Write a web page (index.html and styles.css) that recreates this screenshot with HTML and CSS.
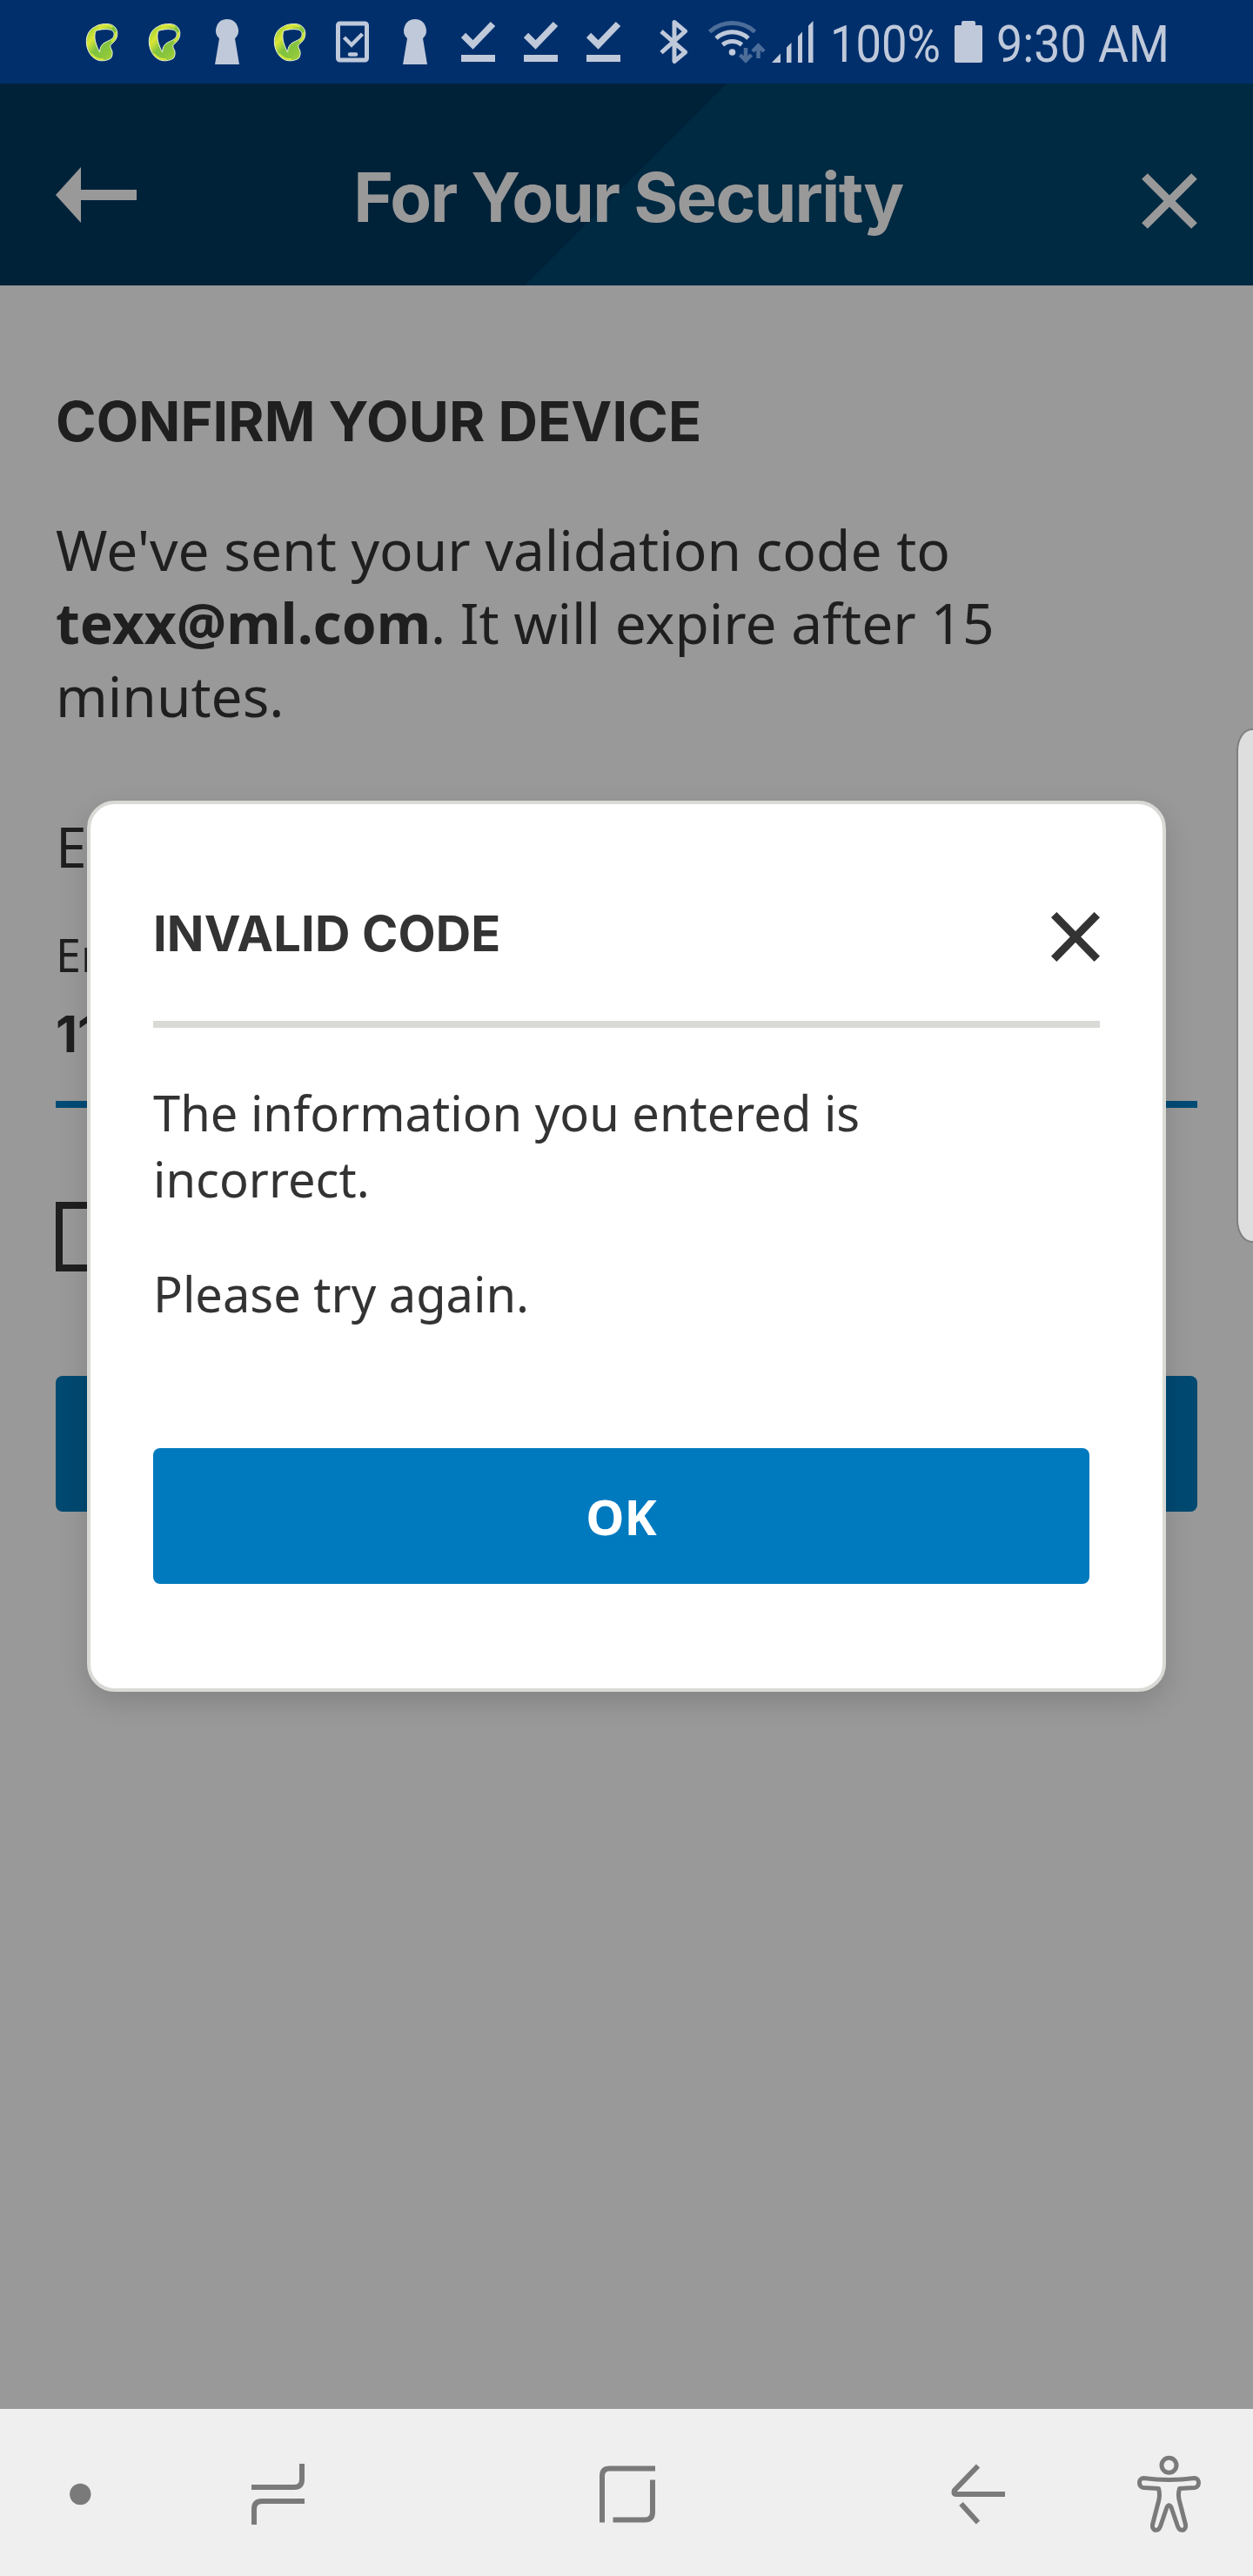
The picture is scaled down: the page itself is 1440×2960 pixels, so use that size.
FILE: index.html
```html
<!DOCTYPE html>
<html lang="en">
<head>
<meta charset="utf-8">
<title>For Your Security</title>
<link rel="stylesheet" href="styles.css">
</head>
<body>
<svg class="defs" width="0" height="0" aria-hidden="true">
  <defs>
    <linearGradient id="leaf" x1="0" y1="0" x2="1" y2="1">
      <stop offset="0" stop-color="#8dc63f"/><stop offset=".12" stop-color="#a4d037"/><stop offset=".3" stop-color="#d9e636"/>
      <stop offset=".5" stop-color="#7fc241"/><stop offset=".72" stop-color="#8cc63c"/><stop offset="1" stop-color="#b5d837"/>
    </linearGradient>
    <symbol id="ribbon" viewBox="0 0 72 96">
      <g transform="translate(-1 0) scale(.3333)">
        <path fill="url(#leaf)" stroke="#eef6d8" stroke-width="3" fill-rule="evenodd" d="M88 92C100 84 118 81 135 83C155 86 167 101 164 122C162 137 153 145 143 153C138 158 141 166 146 174C149 184 147 194 142 201C128 210 108 212 94 206C70 195 57 168 58 140C59 118 70 100 88 92ZM90 106C84 124 87 140 93 156C96 164 99 173 104 180C104 166 109 154 121 147C134 140 149 136 153 123C155 112 149 104 138 102C121 99 105 102 90 106Z"/>
        <path fill="none" stroke="#d8e63a" stroke-width="6" stroke-linecap="round" d="M101 90Q125 85 145 92M160 113Q159 132 146 142M76 187Q91 205 115 205"/>
      </g>
    </symbol>
    <symbol id="keyhole" viewBox="0 0 72 96">
      <path fill="#bfc9da" d="M36 22a13 13 0 0 1 9 22.300L50 74H22L27 44.300A13 13 0 0 1 36 22Z"/>
    </symbol>
    <symbol id="done" viewBox="0 0 72 96">
      <path fill="none" stroke="#bfc9da" stroke-width="7.500" d="M19.500 40.500L30.500 51.500L53.500 27.500"/>
      <path fill="#bfc9da" d="M17 63H56V71H17Z"/>
    </symbol>
  </defs>
</svg>
<div class="screen">
  <div class="status">
    <svg class="slot"><use href="#ribbon"/></svg>
    <svg class="slot"><use href="#ribbon"/></svg>
    <svg class="slot"><use href="#keyhole"/></svg>
    <svg class="slot"><use href="#ribbon"/></svg>
    <svg class="slot" viewBox="0 0 72 96" fill="none" stroke="#bfc9da">
      <rect x="19.500" y="27" width="33" height="42" rx="2" stroke-width="5"/>
      <path stroke-width="4.500" d="M26.500 43L35 51.500L47.500 39"/>
      <path stroke-width="4.500" stroke-linecap="round" d="M33 62.500H40"/>
    </svg>
    <svg class="slot"><use href="#keyhole"/></svg>
    <svg class="slot"><use href="#done"/></svg>
    <svg class="slot"><use href="#done"/></svg>
    <svg class="slot"><use href="#done"/></svg>
    <svg width="81" height="96" viewBox="729 0 81 96" fill="none" stroke="#bfc9da" stroke-width="5" stroke-linejoin="round">
      <path d="M760 36L787.500 60L775 70.500V25.500L787.500 36L760 60.500"/>
    </svg>
    <svg width="72" height="96" viewBox="810 0 72 96" fill="none" stroke="#bfc9da" stroke-width="5">
      <path stroke="#4d6d99" d="M815.500 36.500A39 39 0 0 1 867.500 36.500"/>
      <path d="M823 44A27.500 27.500 0 0 1 860 44M830.500 51.500A17 17 0 0 1 852.500 51.500"/>
      <circle cx="841.500" cy="60" r="3.800" fill="#bfc9da" stroke="none"/>
      <path stroke="#4d6d99" stroke-width="4.500" d="M857 55V69M850.500 63L857 69.500L863.500 63M871.500 67V53M865 59L871.500 52.500L878 59"/>
    </svg>
    <svg width="70" height="96" viewBox="882 0 70 96" fill="#bfc9da">
      <path d="M887 72L897 61.500V72ZM904 72V54.500L909.500 49V72ZM917 72V42L922 36.500V72ZM929 72V29.500L934.500 24V72Z"/>
    </svg>
    <svg class="label" width="135" height="96" viewBox="952 0 135 96"><text class="clock" x="954" y="71" textLength="127" lengthAdjust="spacingAndGlyphs">100%</text></svg>
    <svg width="54" height="96" viewBox="1087 0 54 96" fill="#bfc9da">
      <path d="M1107 24H1119Q1121 24 1121 26V29H1127Q1129 29 1129 31V70Q1129 72 1127 72H1099Q1097 72 1097 70V31Q1097 29 1099 29H1105V26Q1105 24 1107 24Z"/>
    </svg>
    <svg class="label" width="220" height="96" viewBox="1141 0 220 96"><text class="clock" x="1145" y="71" textLength="199" lengthAdjust="spacingAndGlyphs">9:30 AM</text></svg>
  </div>

  <header class="header">
    <svg width="93" height="64" viewBox="0 0 93 64" fill="#999"><path d="M0 32L29 0V26H93V38H29V64Z"/></svg>
    <h1 class="title">For Your Security</h1>
    <svg class="close" width="64" height="64" viewBox="0 0 64 64" stroke="#999" stroke-width="9.500"><path d="M3.500 3.500L60.500 60.500M60.500 3.500L3.500 60.500"/></svg>
  </header>

  <main class="content">
    <h2 class="heading">CONFIRM YOUR DEVICE</h2>
    <p class="intro">We've sent your validation code to <b>texx@ml.com</b>. It will expire after 15 minutes.</p>
    <p class="prompt">E</p>
    <div class="field">
      <div class="field-label">En</div>
      <div class="field-value">11</div>
    </div>
    <div class="checkbox"></div>
    <div class="submit"></div>
  </main>

  <nav class="nav">
    <svg width="1440" height="192" viewBox="0 2768 1440 192" fill="none" stroke="#7a7a7a" stroke-width="6">
      <circle cx="92.300" cy="2866" r="12.200" fill="#7a7a7a" stroke="none"/>
      <path d="M289 2858H338Q347 2858 347 2849V2831M350 2874H301Q292 2874 292 2883V2901"/>
      <path d="M692 2898.500V2845Q692 2836.500 700.500 2836.500H753M704.500 2895.500H741Q750 2895.500 750 2886.500V2849.500"/>
      <path d="M1124 2833.500L1097 2861.500Q1095 2866 1099 2866H1155M1104.500 2877L1124 2898.500"/>
      <g stroke-width="5" stroke-linejoin="round">
        <circle cx="1343.500" cy="2832.700" r="8.500"/>
        <path d="M1314 2847.500Q1329 2849.500 1343.500 2849.500T1373 2847.500C1379 2847.500 1379 2858 1373 2858.500L1355.500 2859.500Q1353.500 2867 1355.500 2874L1362.500 2901C1363.500 2908 1356 2910 1353.500 2903L1346 2881Q1343.500 2876.500 1341 2881L1333.500 2903C1331 2910 1323.500 2908 1324.500 2901L1331.500 2874Q1333.500 2867 1331.500 2859.500L1314 2858.500C1308 2858 1308 2847.500 1314 2847.500Z"/>
      </g>
    </svg>
  </nav>

  <section class="dialog" role="dialog">
    <div class="dialog-head">
      <h3 class="dialog-title">INVALID CODE</h3>
      <svg width="56" height="57" viewBox="0 0 56 57" stroke="#333" stroke-width="9"><path d="M3.200 3.200L52.800 53.800M52.800 3.200L3.200 53.800"/></svg>
    </div>
    <p class="message">The information you entered is incorrect.</p>
    <p class="message">Please try again.</p>
    <button class="ok">OK</button>
  </section>
  <div class="edge"></div>
</div>
</body>
</html>
```

FILE: styles.css
```css
* { box-sizing: border-box; margin: 0; padding: 0; }
body { background: #999; }
svg { display: block; flex: none; }
.defs { position: absolute; }

.screen {
  position: relative;
  display: flex;
  flex-direction: column;
  width: 1440px;
  height: 2960px;
  overflow: hidden;
  background: #999;
  color: #1f1f1f;
  font-family: "Noto Sans", sans-serif;
}

.status { display: flex; height: 96px; padding-left: 81px; background: #002f6c; }
.slot { width: 72px; height: 96px; }
.label { overflow: visible; }
.clock { font-family: Roboto, sans-serif; font-size: 60px; fill: #bfc9da; }

.header {
  display: flex;
  justify-content: space-between;
  height: 232px;
  padding: 96px 64px 0;
  background: linear-gradient(135deg, #002239 0 50%, #002942 50%) -2px 0 / 1442px 232px;
}
.title {
  color: #999;
  font: 700 78px/100px Inter, sans-serif;
  letter-spacing: -1.65px;
  margin: -15px 25px 0 0;
  white-space: nowrap;
}
.close { margin-top: 7px; }

.content { flex: 1; padding: 116px 64px 0; }
.heading { font: 700 63px/80px Inter, sans-serif; letter-spacing: .1px; white-space: nowrap; }
.intro { width: 1200px; margin-top: 66px; font-size: 64px; line-height: 84px; }
.prompt { margin-top: 89px; font-size: 64px; line-height: 84px; }
.field { margin-top: 52px; padding-bottom: 47px; border-bottom: 8px solid #004b75; }
.field-label { font-size: 52px; line-height: 60px; }
.field-value { margin-top: 31px; font: 700 58px/60px Inter, sans-serif; }
.checkbox { width: 80px; height: 80px; margin-top: 108px; border: 8px solid #1f1f1f; }
.submit { height: 156px; margin-top: 120px; border-radius: 8px; background: #004971; }

.nav { height: 192px; background: #efefef; }

.dialog {
  position: absolute;
  left: 100px;
  top: 920px;
  width: 1240px;
  height: 1024px;
  padding: 116px 72px 0;
  border: 4px solid #d9dad6;
  border-radius: 32px;
  background: #fff;
  color: #333;
  box-shadow: 0 12px 32px rgba(0, 0, 0, .14);
}
.dialog-head {
  display: flex;
  justify-content: space-between;
  align-items: flex-end;
  height: 141px;
  padding-bottom: 68px;
  border-bottom: 8px solid #d9dad6;
  margin-bottom: 59px;
}
.dialog-title { font: 700 56px/64px Inter, sans-serif; letter-spacing: .15px; white-space: nowrap; }
.message { width: 1000px; margin-bottom: 56px; font-size: 56px; line-height: 76px; }
.ok {
  display: block;
  width: 1076px;
  height: 156px;
  margin-top: 140px;
  border: 0;
  border-radius: 8px;
  background: #007abf;
  color: #fff;
  font: 700 56px/156px "Noto Sans", sans-serif;
}

.edge {
  position: absolute;
  left: 1421px;
  top: 837px;
  width: 60px;
  height: 591px;
  border: 2px solid #7f7f7f;
  border-radius: 18px / 26px;
  background: #dedede;
}
```
